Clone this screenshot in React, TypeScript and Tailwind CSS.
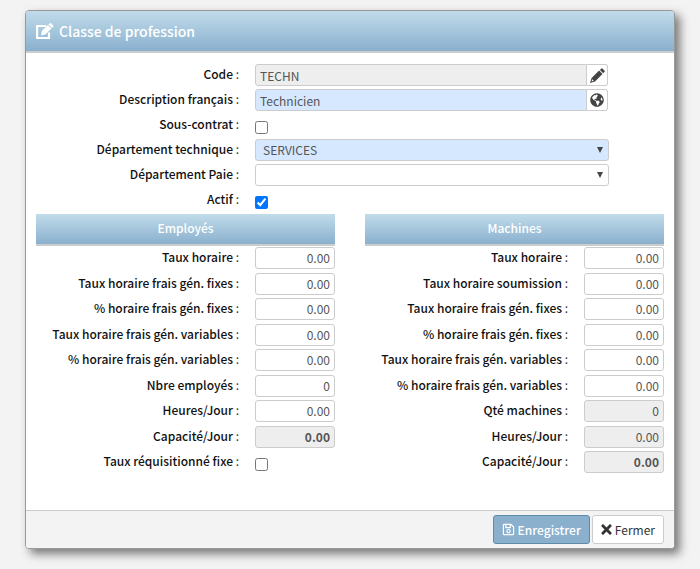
import { useId, useState } from "react";
import { FaGlobeAmericas, FaRegSave, FaTimes } from "react-icons/fa";

type RateField = {
  label: string;
  value?: string;
  type?: "checkbox";
  readOnly?: boolean;
  bold?: boolean;
};

const employeeFields: RateField[] = [
  { label: "Taux horaire", value: "0.00" },
  { label: "Taux horaire frais gén. fixes", value: "0.00" },
  { label: "% horaire frais gén. fixes", value: "0.00" },
  { label: "Taux horaire frais gén. variables", value: "0.00" },
  { label: "% horaire frais gén. variables", value: "0.00" },
  { label: "Nbre employés", value: "0" },
  { label: "Heures/Jour", value: "0.00" },
  { label: "Capacité/Jour", value: "0.00", readOnly: true, bold: true },
  { label: "Taux réquisitionné fixe", type: "checkbox" },
];

const machineFields: RateField[] = [
  { label: "Taux horaire", value: "0.00" },
  { label: "Taux horaire soumission", value: "0.00" },
  { label: "Taux horaire frais gén. fixes", value: "0.00" },
  { label: "% horaire frais gén. fixes", value: "0.00" },
  { label: "Taux horaire frais gén. variables", value: "0.00" },
  { label: "% horaire frais gén. variables", value: "0.00" },
  { label: "Qté machines", value: "0", readOnly: true },
  { label: "Heures/Jour", value: "0.00", readOnly: true },
  { label: "Capacité/Jour", value: "0.00", readOnly: true, bold: true },
];

function EditIcon() {
  return (
    <svg className="h-[17px] w-[18px]" viewBox="0 0 18 17" fill="currentColor">
      <path d="M10 3H1.1v12H13V9.5" fill="none" stroke="currentColor" strokeWidth="2.2" />
      <path d="M5 12.6 5.8 8 11.8 2l3.6 3.6-6 6z" />
      <path d="M12.4 1.5 13.6.5q.9-.8 1.8 0l1.7 1.7q.8.9 0 1.8l-1.2 1.1z" />
    </svg>
  );
}

function PencilIcon() {
  return (
    <svg className="size-[15px] fill-[#444]" viewBox="0 0 15 15" fillRule="evenodd">
      <path d="M9.9 1.9 11.1.7q.8-.7 1.6 0l1.7 1.7q.7.8 0 1.6l-1.2 1.2z" />
      <path d="M9.1 2.6 12.5 6 5 13.4 0 15l1.6-5zM2.2 11.3l-.6 2.1 2.1-.6z" />
    </svg>
  );
}

function FieldLabel({ id, text }: { id: string; text: string }) {
  return (
    <label htmlFor={id} className="block whitespace-nowrap pr-px text-right leading-5">
      <span className="font-medium text-[#111]">{text}</span> :
    </label>
  );
}

function Row({ id, label, children }: { id: string; label: string; children: React.ReactNode }) {
  return (
    <div className="flex h-[25px] items-start">
      <div className="w-[204px] shrink-0">
        <FieldLabel id={id} text={label} />
      </div>
      <div className="ml-[15px] w-[354px]">{children}</div>
    </div>
  );
}

function Select({ id, options, className }: { id: string; options: string[]; className: string }) {
  return (
    <div className="relative">
      <select
        id={id}
        className={`block h-[22px] w-full appearance-none rounded-[3px] border border-[#ccc] pl-[7px] leading-5 text-[#555] ${className}`}
      >
        {options.map((option) => (
          <option key={option}>{option}</option>
        ))}
      </select>
      <svg className="pointer-events-none absolute right-[6px] top-[8px] size-[6px] fill-[#444]" viewBox="0 0 6 6">
        <path d="M0 0h6L3 6z" />
      </svg>
    </div>
  );
}

function RateColumn({ title, fields }: { title: string; fields: RateField[] }) {
  const prefix = useId();
  return (
    <section>
      <h2 className="mb-px border-b-2 border-[#ccc] bg-linear-to-b from-[#c1dcea] to-[#8ab0ce] pb-[2px] text-center font-medium leading-7 text-white">
        {title}
      </h2>
      <div className="grid h-[230px] auto-rows-fr">
        {fields.map((field, index) => {
          const id = `${prefix}-${index}`;
          return (
            <div key={id} className="grid grid-cols-[1fr_80px] items-start gap-[15px]">
              <FieldLabel id={id} text={field.label} />
              {field.type === "checkbox" ? (
                <input id={id} type="checkbox" className="mt-[7px] size-[13px]" />
              ) : (
                <input
                  id={id}
                  defaultValue={field.value}
                  readOnly={field.readOnly}
                  className={`h-[22px] w-full rounded-[3px] border border-[#ccc] px-1 pb-px text-right text-[#555] ${
                    field.readOnly ? "bg-[#eee]" : "bg-white"
                  } ${field.bold ? "font-bold" : ""}`}
                />
              )}
            </div>
          );
        })}
      </div>
    </section>
  );
}

export default function App() {
  const [active, setActive] = useState(true);

  return (
    <div className="min-h-screen bg-[#f3f3f3] px-[25px] py-[10px] font-['Noto_Sans_CJK_SC','Noto_Sans',sans-serif] text-[12px] text-[#333]">
      <form className="overflow-hidden rounded-[4px] border border-[#999] bg-white shadow-[5px_5px_10px_rgba(0,0,0,0.5)]">
        <header className="flex h-[42px] items-center gap-[5px] border-b-2 border-[#ccc] bg-linear-to-b from-[#c1dcea] to-[#8ab0ce] px-[10px] text-white">
          <EditIcon />
          <h1 className="text-[14px] font-medium leading-5">Classe de profession</h1>
        </header>

        <div className="px-[10px] pb-[33px] pt-[11px]">
          <Row id="code" label="Code">
            <div className="mr-px flex">
              <input
                id="code"
                readOnly
                defaultValue="TECHN"
                className="h-[22px] min-w-0 flex-1 rounded-l-[3px] border border-[#ccc] bg-[#eee] px-1 text-[#555]"
              />
              <button type="button" aria-label="Modifier" className="flex w-[21px] items-center justify-center rounded-r-[3px] border border-l-0 border-[#ccc]">
                <PencilIcon />
              </button>
            </div>
          </Row>
          <Row id="description" label="Description français">
            <div className="mr-px flex">
              <input
                id="description"
                defaultValue="Technicien"
                className="h-[22px] min-w-0 flex-1 rounded-l-[3px] border border-[#ccc] bg-[#d6e8ff] px-1 text-[#555]"
              />
              <button type="button" aria-label="Traductions" className="flex w-[21px] items-center justify-center rounded-r-[3px] border border-l-0 border-[#ccc]">
                <FaGlobeAmericas className="size-[14px] text-[#444]" />
              </button>
            </div>
          </Row>
          <Row id="subcontract" label="Sous-contrat">
            <input id="subcontract" type="checkbox" className="mt-[7px] block size-[13px]" />
          </Row>
          <Row id="technical" label="Département technique">
            <Select id="technical" options={["SERVICES"]} className="bg-[#d6e8ff]" />
          </Row>
          <Row id="payroll" label="Département Paie">
            <Select id="payroll" options={[""]} className="bg-white" />
          </Row>
          <Row id="active" label="Actif">
            <input
              id="active"
              type="checkbox"
              checked={active}
              onChange={(e) => setActive(e.target.checked)}
              className="mt-[7px] block size-[13px]"
            />
          </Row>

          <div className="grid grid-cols-2 gap-[30px]">
            <RateColumn title="Employés" fields={employeeFields} />
            <RateColumn title="Machines" fields={machineFields} />
          </div>
        </div>

        <footer className="flex justify-end gap-[2px] border-t border-[#ccc] bg-[#f3f3f3] px-[10px] py-1">
          <button type="button" className="flex h-[29px] items-center gap-[3px] rounded-[3px] border border-[#5f8bab] bg-[#8ab0ce] px-2 font-medium text-white">
            <FaRegSave className="size-[13px]" />
            Enregistrer
          </button>
          <button type="button" className="flex h-[29px] items-center gap-[3px] rounded-[3px] border border-[#ccc] bg-white px-2">
            <FaTimes className="h-[15px] w-[11px]" />
            Fermer
          </button>
        </footer>
      </form>
    </div>
  );
}
